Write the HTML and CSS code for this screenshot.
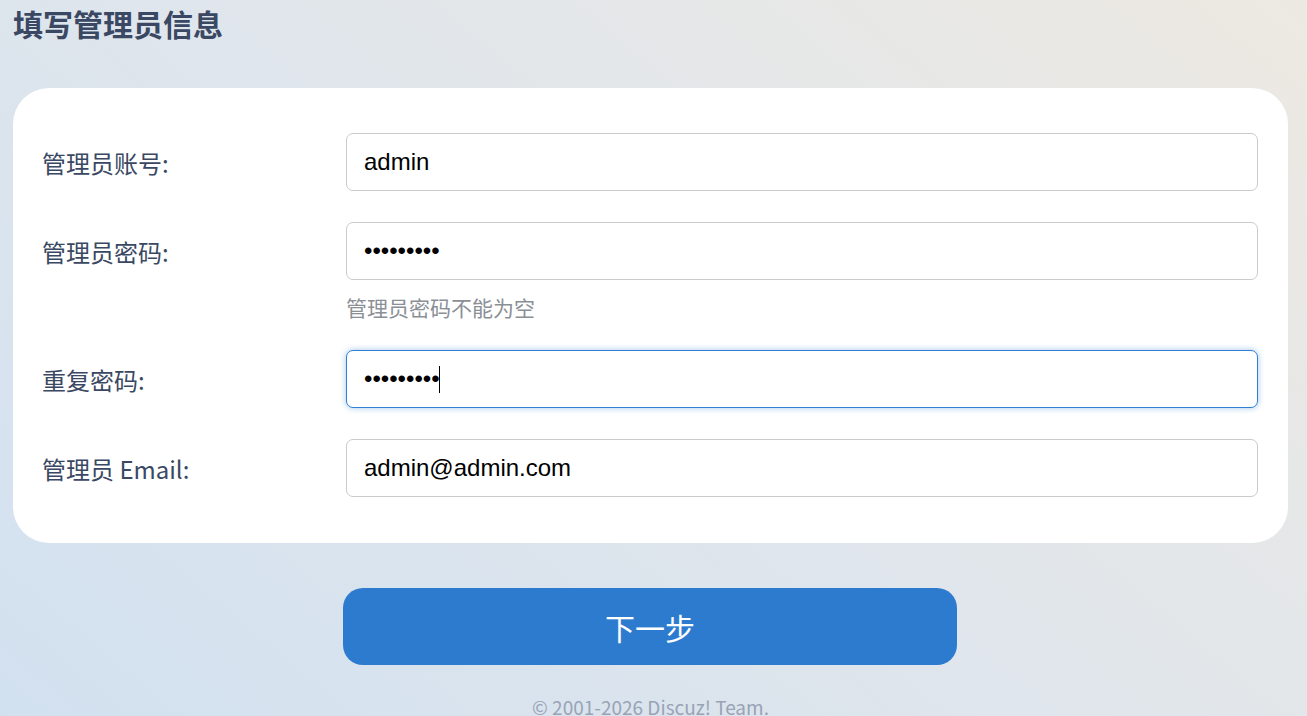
FILE: index.html
```html
<!DOCTYPE html>
<html lang="zh-CN">
<head>
<meta charset="utf-8">
<title>填写管理员信息</title>
<link rel="stylesheet" href="styles.css">
</head>
<body>
<div class="page">
  <h1 class="title">填写管理员信息</h1>
  <form class="card">
    <div class="row">
      <label class="label" for="u">管理员账号:</label>
      <div class="field"><input class="input" id="u" type="text" value="admin"></div>
    </div>
    <div class="row">
      <label class="label" for="p">管理员密码:</label>
      <div class="field">
        <input class="input" id="p" type="password" value="123456789">
        <div class="hint">管理员密码不能为空</div>
      </div>
    </div>
    <div class="row">
      <label class="label" for="p2">重复密码:</label>
      <div class="field"><input class="input focused" id="p2" type="password" value="123456789"><span class="caret"></span></div>
    </div>
    <div class="row">
      <label class="label" for="e">管理员 Email:</label>
      <div class="field"><input class="input" id="e" type="text" value="admin@admin.com"></div>
    </div>
  </form>
  <div class="actions"><button class="btn" type="button">下一步</button></div>
  <div class="footer">© 2001-2026 <a href="#">Discuz! Team</a>.</div>
</div>
</body>
</html>
```
FILE: styles.css
```css
html, body {
  margin: 0;
  height: 100%;
}
body {
  background: linear-gradient(40deg, #d2e1f0 0%, #e0e6ec 50%, #ede9e2 100%);
  font-family: "Noto Sans CJK SC", "Noto Sans", sans-serif;
  overflow: hidden;
}
.page {
  margin: 0 19px 0 13px;
}
.title {
  margin: 0;
  padding-top: 3px;
  height: 85px;
  font-size: 30px;
  line-height: 40px;
  font-weight: 700;
  color: #3a4863;
}
.card {
  background: #fff;
  border-radius: 36px;
  padding: 45px 30px 46px 29px;
  display: flex;
  flex-direction: column;
  gap: 31px;
}
.row {
  display: flex;
  align-items: flex-start;
}
.label {
  width: 304px;
  flex: none;
  height: 58px;
  display: flex;
  align-items: center;
  font-size: 24px;
  color: #3a4863;
}
.field {
  flex: 1;
  position: relative;
}
.input {
  display: block;
  box-sizing: border-box;
  width: 100%;
  height: 58px;
  border: 1px solid #cbcbcb;
  border-radius: 7px;
  padding: 0 17px;
  font-family: "Liberation Sans", Arial, sans-serif;
  font-size: 24px;
  color: #000;
  background: #fff;
  outline: none;
}
.input.focused {
  border-color: #2f7fd3;
  box-shadow: 0 0 6px rgba(47, 127, 211, 0.45);
}
.caret {
  position: absolute;
  left: 93px;
  top: 16px;
  width: 1px;
  height: 27px;
  background: #000;
}
.hint {
  margin-top: 15px;
  height: 24px;
  line-height: 24px;
  font-size: 21px;
  color: #8b8f96;
}
.actions {
  display: flex;
  justify-content: center;
  padding-top: 45px;
  padding-right: 1px;
}
.btn {
  width: 614px;
  height: 77px;
  border: none;
  border-radius: 20px;
  background: #2d7bcf;
  color: #fff;
  font-family: "Noto Sans CJK SC", "Noto Sans", sans-serif;
  font-size: 30px;
  font-weight: 400;
}
.footer {
  margin-top: 30px;
  text-align: center;
  font-size: 19px;
  line-height: 24px;
  color: #98a3b6;
}
.footer a {
  color: #98a3b6;
}
```
